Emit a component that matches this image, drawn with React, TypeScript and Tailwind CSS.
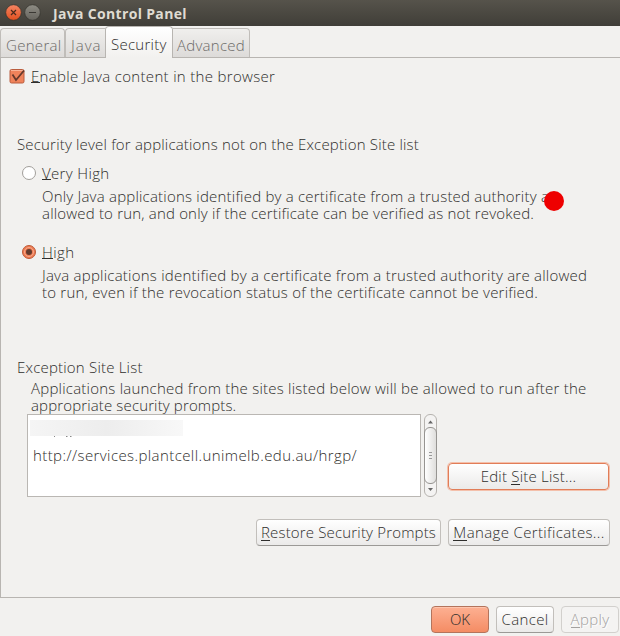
import type { ReactNode } from "react";

function Key({ children }: { children: ReactNode }) {
  return <span className="relative after:absolute after:left-0 after:right-0 after:top-[16px] after:h-px after:bg-current">{children}</span>;
}

function Button({ className, children }: { className: string; children: ReactNode }) {
  return (
    <button className={"flex shrink-0 items-center justify-center whitespace-nowrap rounded-[4px] border leading-[17px] " + className}>
      {children}
    </button>
  );
}

const plain = "border-[#c2bfbb] border-b-[#9b9996] bg-linear-to-b from-white to-[#ebeae9] ";

function Tab({ className, children }: { className: string; children: ReactNode }) {
  return (
    <div className={"h-[29px] whitespace-nowrap rounded-t-[4px] border border-b-0 border-[#c0bdb9] bg-linear-to-b from-[#f0efed] to-[#dddbd9] pt-[8px] leading-[17px] text-[#6c6a68] " + className}>
      {children}
    </div>
  );
}

export default function App() {
  return (
    <div className="flex h-[636px] w-[620px] flex-col overflow-hidden bg-[#f2f1ef] font-['Open_Sans','Noto_Sans',sans-serif] text-[15px] font-light leading-[17px] text-[#2f2e2c]">
      <header className="flex h-[26px] shrink-0 items-center bg-linear-to-b from-[#56534b] to-[#403e38] pl-[5px]">
        <svg width="36" height="18" viewBox="0 0 36 18">
          <defs>
            <linearGradient id="close" x1="0" y1="0" x2="0" y2="1">
              <stop offset="0" stopColor="#f58563" />
              <stop offset="1" stopColor="#e2501f" />
            </linearGradient>
            <linearGradient id="min" x1="0" y1="0" x2="0" y2="1">
              <stop offset="0" stopColor="#8e8c84" />
              <stop offset="1" stopColor="#66645d" />
            </linearGradient>
          </defs>
          <circle cx="8.5" cy="8.500" r="7.8" fill="url(#close)" stroke="#34322d" strokeWidth=".7" />
          <path d="M6 6l5 5M11 6l-5 5" stroke="#4a2a1c" strokeWidth="1.2" />
          <circle cx="27.5" cy="8.500" r="7.8" fill="url(#min)" stroke="#34322d" strokeWidth=".7" />
          <path d="M24 8.5h7" stroke="#3a3833" strokeWidth="1" />
        </svg>
        <h1 className="ml-[12px] whitespace-nowrap text-[14px] font-bold tracking-[0.33px] text-[#dfdbd2]">Java Control Panel</h1>
      </header>

      <nav className="z-10 flex h-[32px] shrink-0 items-end pb-px">
        <Tab className="w-[65px] pl-[5px] tracking-[0.3px]">General</Tab>
        <Tab className="w-[40px] rounded-tr-none border-r-0 pl-[5px] tracking-[1px]">Java</Tab>
        <div className="-mb-px h-[32px] w-[68px] rounded-t-[4px] border border-b-0 border-[#b8b5b1] bg-linear-to-b from-white to-[#f2f1ef] pl-[5px] pt-[9px] tracking-[0.25px]">Security</div>
        <Tab className="w-[77px] rounded-tl-none border-l-0 pl-[4px] tracking-[0.25px]">Advanced</Tab>
      </nav>

      <main className="-mt-px flex h-[541px] shrink-0 flex-col border border-r-0 border-[#b8b5b1] pl-[8px]">
        <label className="mt-[10px] flex h-[17px] gap-[6px]">
          <svg width="16" height="17" viewBox="0 0 16 17">
            <rect x="1" y="1.5" width="14" height="13.500" rx="1.500" fill="#f0835b" stroke="#b95d3e" />
            <path d="M2 2.500h12" stroke="#f9b397" />
            <path d="M3.500 6.500l3.500 5.500L15 2.500" fill="none" stroke="#66392b" strokeWidth="1.800" />
          </svg>
          <div className="whitespace-nowrap tracking-[0.32px]"><Key>E</Key>nable Java content in the browser</div>
        </label>

        <h2 className="ml-[8px] mt-[51px] whitespace-nowrap tracking-[0.18px]">Security level for applications not on the Exception Site list</h2>
        <label className="ml-[12px] mt-[12px] flex h-[17px] gap-[6px]">
          <svg width="15" height="15" viewBox="0 0 15 15">
            <circle cx="8" cy="8" r="6.5" fill="#fff" stroke="#a19e9a" />
          </svg>
          <div className="tracking-[0.35px]"><Key>V</Key>ery High</div>
        </label>
        <div className="relative ml-[33px] mt-[6px] w-[560px] whitespace-nowrap">
          <div className="tracking-[0.21px]">Only Java applications identified by a certificate from a trusted authority a</div>
          <div className="tracking-[0.185px]">allowed to run, and only if the certificate can be verified as not revoked.</div>
          <i className="absolute left-[502px] top-[3px] size-[20px] rounded-full bg-[#ee0000]" />
        </div>

        <label className="ml-[12px] mt-[22px] flex h-[17px] gap-[6px]">
          <svg width="15" height="15" viewBox="0 0 15 15">
            <circle cx="8" cy="8" r="6.5" fill="#ee7b51" stroke="#bd5b3a" />
            <circle cx="8" cy="8" r="4.5" fill="none" stroke="#f6a98d" />
            <circle cx="8" cy="8" r="3" fill="#633b2e" />
          </svg>
          <div className="tracking-[0.4px]"><Key>H</Key>igh</div>
        </label>
        <div className="ml-[33px] mt-[6px] whitespace-nowrap">
          <div className="tracking-[0.235px]">Java applications identified by a certificate from a trusted authority are allowed</div>
          <div className="tracking-[0.22px]">to run, even if the revocation status of the certificate cannot be verified.</div>
        </div>

        <h2 className="ml-[8px] mt-[58px] tracking-[0.2px]">Exception Site List</h2>
        <div className="ml-[22px] mt-[4px] whitespace-nowrap">
          <div className="tracking-[0.23px]">Applications launched from the sites listed below will be allowed to run after the</div>
          <div className="tracking-[0.14px]">appropriate security prompts.</div>
        </div>

        <section className="ml-[18px] flex h-[83px]">
          <div className="w-[394px] border border-[#bab7b3] bg-white pl-[2px] pt-[5px]">
            <div className="h-[16px] w-[153px] bg-linear-to-r from-[#f5f5f5] via-[#ededed] to-[#f8f8f8]" />
            <svg className="ml-[24px] block" width="22" height="2"><path d="M0 .5h1M12 .5h1.500M16 .5h1.500" stroke="#888" /></svg>
            <div className="ml-[3px] mt-[9px] whitespace-nowrap tracking-[0.41px]">http://services.plantcell.unimelb.edu.au/hrgp/</div>
          </div>
          <div className="ml-[3px] flex h-[83px] w-[13px] flex-col rounded-[6px] border border-[#b6b3af] bg-[#f4f3f2]">
            <svg width="11" height="12"><path d="M3 8.500h5L5.500 5.500z" fill="#666" /></svg>
            <div className="-mx-px flex h-[57px] flex-col items-center justify-center gap-[2px] rounded-[6px] border border-[#969491] bg-linear-to-r from-white to-[#dfdedc]">
              <i className="h-px w-[3px] bg-[#999]" />
              <i className="h-px w-[3px] bg-[#999]" />
              <i className="h-px w-[3px] bg-[#999]" />
            </div>
            <svg width="11" height="12"><path d="M3 4h5L5.500 7z" fill="#666" /></svg>
          </div>
          <Button className="ml-[11px] mt-[49px] h-[27px] w-[161px] border-[#e17d58] bg-linear-to-b from-white to-[#ebeae9] tracking-[0.2px] shadow-[0_0_0_1px_#f4c0ab]">
            Edit&nbsp;<Key>S</Key>ite List...
          </Button>
        </section>
        <div className="mt-[22px] flex gap-[7px] pl-[247px]">
          <Button className={plain + "h-[27px] w-[185px] tracking-[0.17px]"}><Key>R</Key>estore Security Prompts</Button>
          <Button className={plain + "h-[27px] w-[162px] tracking-[0.36px]"}><Key>M</Key>anage Certificates...</Button>
        </div>
      </main>

      <footer className="flex gap-[7px] pl-[431px] pt-[8px]">
        <Button className="h-[27px] w-[58px] border-[#b4745c] bg-linear-to-b from-[#fdb092] to-[#f48c64] shadow-[inset_0_1px_#ffc5ad]">OK</Button>
        <Button className={plain + "h-[27px] w-[58px] tracking-[0.35px]"}>Cancel</Button>
        <Button className="h-[27px] w-[58px] border-[#d2d0cd] bg-[#f4f3f2] tracking-[0.35px] text-[#a3a19f] [text-shadow:1px_1px_#fff]"><Key>A</Key>pply</Button>
      </footer>
    </div>
  );
}
